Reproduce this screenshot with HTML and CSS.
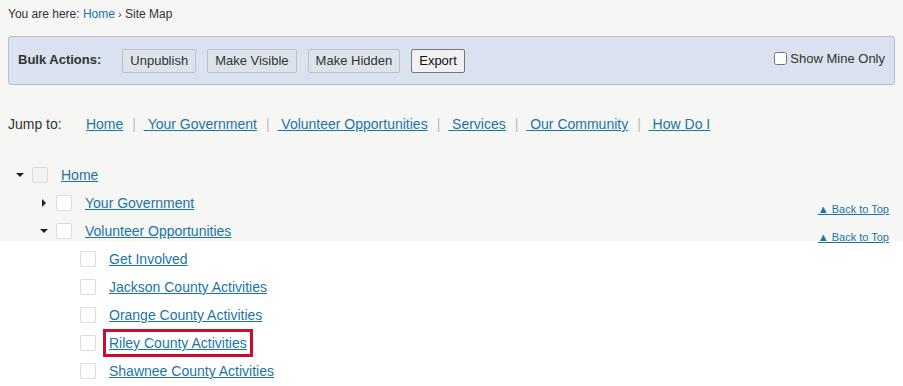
FILE: index.html
```html
<!DOCTYPE html>
<html lang="en">
<head>
    <meta charset="UTF-8">
    <title>Site Map</title>
    <link rel="stylesheet" href="styles.css">
</head>
<body>

    <div class="breadcrumb">
        You are here: <a href="#">Home</a> <span class="sep">›</span> Site Map
    </div>

    <div class="bulk-bar">
        <span class="bulk-label">Bulk Actions:</span>
        <button class="bulk-btn">Unpublish</button>
        <button class="bulk-btn">Make Visible</button>
        <button class="bulk-btn">Make Hidden</button>
        <button class="bulk-btn export">Export</button>
        <label class="mine-only"><input type="checkbox"> Show Mine Only</label>
    </div>

    <div class="jump">
        <span class="jump-label">Jump to:</span>
        <a href="#">Home</a><span class="bar">|</span>
        <a href="#">&nbsp;Your Government</a><span class="bar">|</span>
        <a href="#">&nbsp;Volunteer Opportunities</a><span class="bar">|</span>
        <a href="#">&nbsp;Services</a><span class="bar">|</span>
        <a href="#">&nbsp;Our Community</a><span class="bar">|</span>
        <a href="#">&nbsp;How Do I</a>
    </div>

    <ul class="tree">
        <li class="row lvl0">
            <span class="caret down"></span>
            <span class="box grey"></span>
            <a href="#">Home</a>
        </li>
        <li class="row lvl1">
            <span class="caret right"></span>
            <span class="box"></span>
            <a href="#">Your Government</a>
            <a class="top-link" href="#">&#9650; Back to Top</a>
        </li>
        <li class="row lvl1">
            <span class="caret down"></span>
            <span class="box"></span>
            <a href="#">Volunteer Opportunities</a>
            <a class="top-link" href="#">&#9650; Back to Top</a>
        </li>
        <li class="row lvl2">
            <span class="caret"></span>
            <span class="box"></span>
            <a href="#">Get Involved</a>
        </li>
        <li class="row lvl2">
            <span class="caret"></span>
            <span class="box"></span>
            <a href="#">Jackson County Activities</a>
        </li>
        <li class="row lvl2">
            <span class="caret"></span>
            <span class="box"></span>
            <a href="#">Orange County Activities</a>
        </li>
        <li class="row lvl2">
            <span class="caret"></span>
            <span class="box"></span>
            <a class="highlight" href="#">Riley County Activities</a>
        </li>
        <li class="row lvl2">
            <span class="caret"></span>
            <span class="box"></span>
            <a href="#">Shawnee County Activities</a>
        </li>
    </ul>

</body>
</html>
```

FILE: styles.css
```css
* {
    margin: 0;
    padding: 0;
    box-sizing: border-box;
}

body {
    font-family: "Liberation Sans", Arial, sans-serif;
    color: #333;
    padding: 0 8px;
    background: linear-gradient(#f6f6f4 0, #f6f6f4 241px, #fff 241px);
    min-height: 386px;
}

a {
    color: #1b75a3;
}

.breadcrumb {
    font-size: 12px;
    line-height: 14px;
    padding-top: 7px;
}

.breadcrumb a {
    text-decoration: none;
}

.breadcrumb .sep {
    font-size: 10px;
}

.bulk-bar {
    margin-top: 14px;
    height: 49px;
    display: flex;
    align-items: center;
    padding: 0 9px;
    background: #d9e2ee;
    border: 1px solid #b5bfcc;
    border-radius: 3px;
}

.bulk-label {
    font-size: 13px;
    font-weight: bold;
    margin-right: 21px;
    margin-top: -3px;
}

.bulk-btn {
    font-family: inherit;
    font-size: 13px;
    color: #333;
    height: 24px;
    padding: 0 7px;
    margin-right: 11px;
    background: #dde3eb;
    border: 1px solid #b8c0ca;
    border-radius: 2px;
}

.bulk-btn.export {
    background: #f0f0f0;
    border-color: #767676;
    color: #111;
}

.mine-only {
    margin-left: auto;
    margin-top: -4px;
    font-size: 13px;
    display: flex;
    align-items: center;
    gap: 3px;
}

.mine-only input {
    width: 13px;
    height: 13px;
    margin: 0;
}

.jump {
    margin-top: 30px;
    font-size: 14px;
    line-height: 18px;
}

.jump-label {
    display: inline-block;
    width: 74px;
}

.jump .bar {
    color: #bbb;
    margin: 0 4px 0 9px;
}

.tree {
    list-style: none;
    margin-top: 28px;
    font-size: 14px;
}

.row {
    display: flex;
    align-items: center;
    height: 28px;
}

.row.lvl1 {
    padding-left: 24px;
}

.row.lvl2 {
    padding-left: 48px;
}

.caret {
    width: 16px;
    height: 16px;
    margin-left: 8px;
    position: relative;
}

.caret.down::before {
    content: "";
    position: absolute;
    left: 0;
    top: 6px;
    border-left: 4px solid transparent;
    border-right: 4px solid transparent;
    border-top: 4px solid #222;
}

.caret.right::before {
    content: "";
    position: absolute;
    left: 2px;
    top: 4px;
    border-top: 4px solid transparent;
    border-bottom: 4px solid transparent;
    border-left: 4px solid #222;
}

.box {
    width: 16px;
    height: 16px;
    background: #fff;
    border: 1px solid #dcdcdc;
    border-radius: 2px;
    margin-right: 13px;
}

.box.grey {
    background: #f2f2f2;
}

.row a.highlight {
    outline: 3px solid #c8102e;
    outline-offset: 3px;
}

.top-link {
    margin-left: auto;
    margin-right: 6px;
    align-self: flex-end;
    font-size: 11px;
    margin-bottom: 2px;
}
```
